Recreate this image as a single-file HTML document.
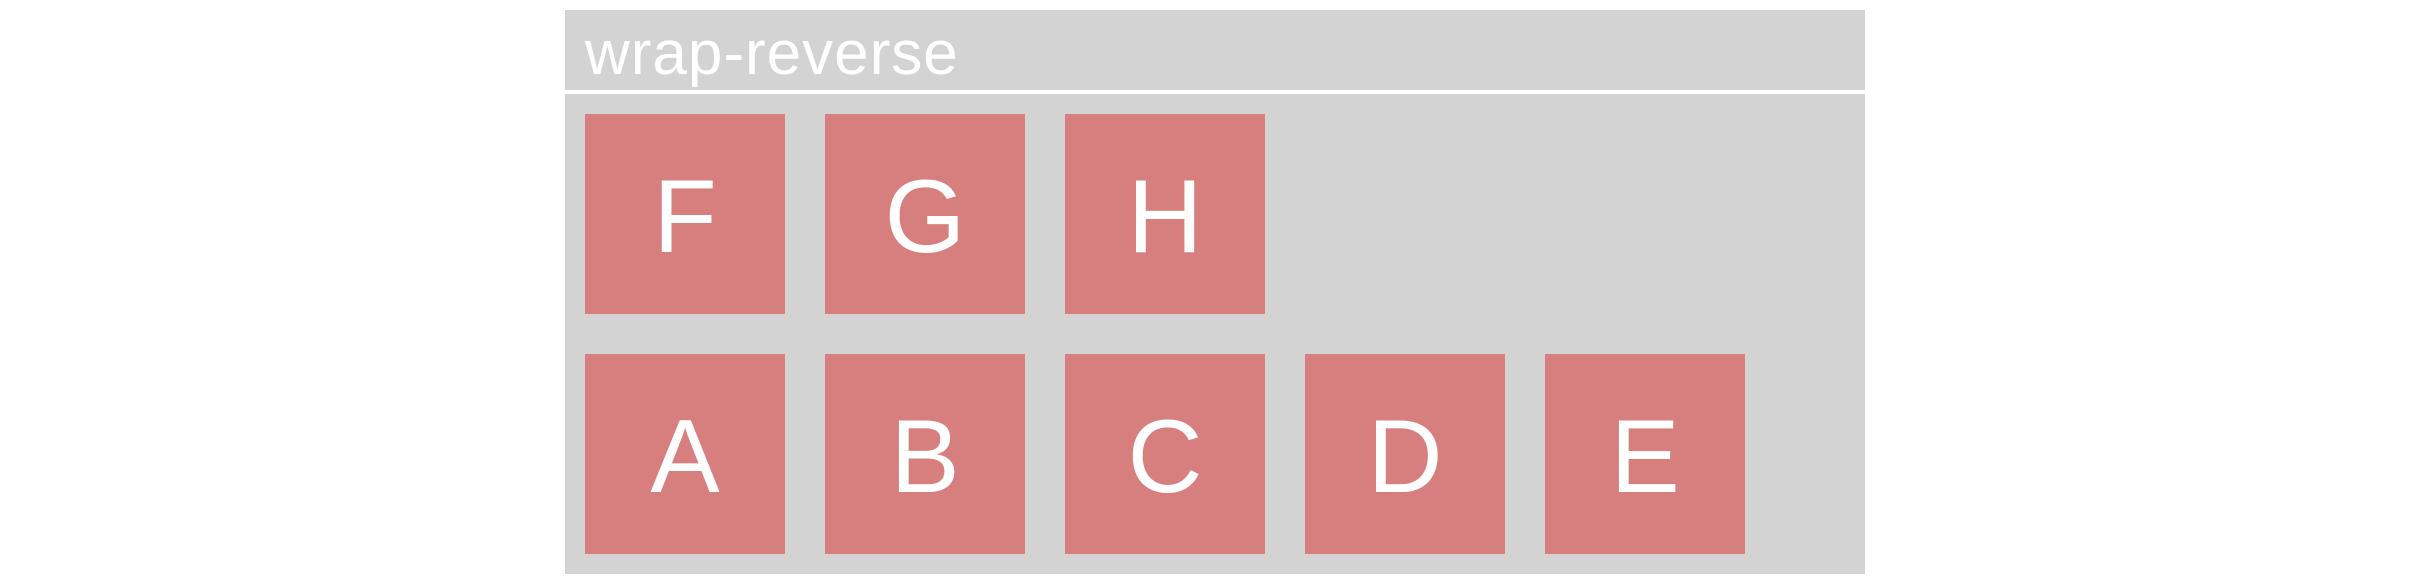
<!DOCTYPE html>
<html><head><style>
body{margin:0;width:2430px;height:588px;background:#fff;position:relative;overflow:hidden;font-family:"Liberation Sans",sans-serif}
.hd{position:absolute;left:565px;top:10px;width:1300px;height:80px;background:#d3d3d3;overflow:hidden}
.hd span{position:absolute;left:20px;top:11px;font-size:62px;color:#fff;line-height:65px;letter-spacing:1px}
.bd{position:absolute;left:565px;top:94px;width:1300px;height:480px;background:#d3d3d3}
.b{position:absolute;width:200px;height:200px;background:#d77f7e;color:#fff;font-size:104px;display:flex;align-items:center;justify-content:center;line-height:1}
.b span{position:relative;top:3px}
</style></head><body>
<div class="hd"><span>wrap-reverse</span></div>
<div class="bd"></div>
<div class="b" style="left:585px;top:114px"><span>F</span></div>
<div class="b" style="left:825px;top:114px"><span>G</span></div>
<div class="b" style="left:1065px;top:114px"><span>H</span></div>
<div class="b" style="left:585px;top:354px"><span>A</span></div>
<div class="b" style="left:825px;top:354px"><span>B</span></div>
<div class="b" style="left:1065px;top:354px"><span>C</span></div>
<div class="b" style="left:1305px;top:354px"><span>D</span></div>
<div class="b" style="left:1545px;top:354px"><span>E</span></div>
</body></html>
